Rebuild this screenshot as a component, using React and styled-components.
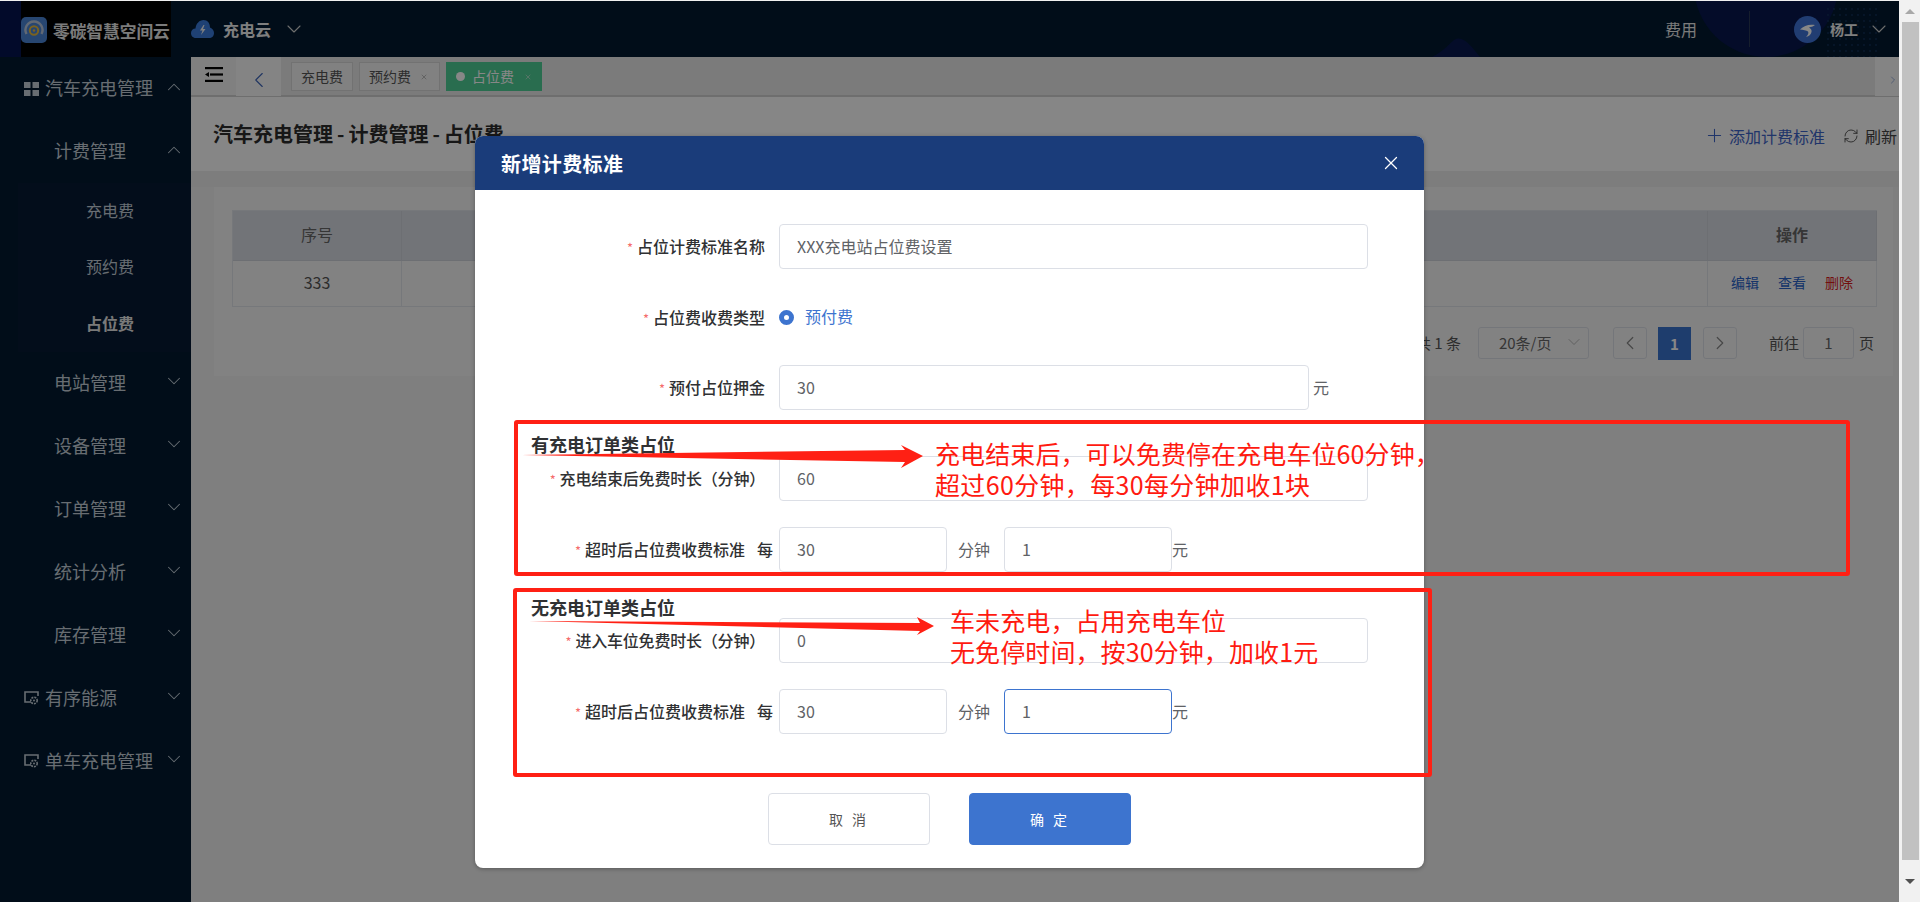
import React from "react";
import styled, { createGlobalStyle } from "styled-components";
import { ChevronDown, ChevronUp, ChevronLeft, ChevronRight, X, Plus, RefreshCw } from "lucide-react";

const FONT = `"Noto Sans CJK SC", "Noto Sans", sans-serif`;

const Global = createGlobalStyle`
  html, body { margin: 0; padding: 0; height: 902px; overflow: hidden; background: #f1f1f1; }
  * { box-sizing: border-box; }
  body { font-family: ${FONT}; }
`;

const Page = styled.div`display: flex; width: 1920px; height: 902px;`;
const Screen = styled.div`position: relative; width: 1899px; height: 902px; padding-top: 1px; background: #f0f0f0; overflow: hidden;`;

/* scrollbar */
const Scrollbar = styled.div`width: 21px; height: 902px; background: #f1f1f1; display: flex; flex-direction: column; align-items: center;`;
const ScrollArrow = styled.div`height: ${p => p.$h}px; width: 100%; display: flex; align-items: center; justify-content: center;`;
const Thumb = styled.div`width: 17px; flex: 1; margin-left: 1px; background: #c1c1c1;`;
const TriUp = styled.div`width: 0; height: 0; border-left: 5px solid transparent; border-right: 5px solid transparent; border-bottom: 5px solid ${p => p.$c};`;
const TriDown = styled.div`width: 0; height: 0; border-left: 5px solid transparent; border-right: 5px solid transparent; border-top: 5px solid ${p => p.$c};`;

/* header */
const Header = styled.header`position: relative; height: 56px; display: flex; align-items: center; background: #021a30; color: #fff; overflow: hidden;`;
const Deco = styled.svg`position: absolute; left: 0; top: 0; pointer-events: none;`;
const LogoWrap = styled.div`position: relative; width: 171px; height: 56px; padding-left: 21px; background: linear-gradient(90deg, #051450 21px, #000 21px); align-self: stretch; flex: none;`;
const LogoInner = styled.div`display: flex; align-items: center; height: 55px; margin-top: 1px; background: #000; gap: 6px;`;
const LogoText = styled.span`font-size: 16.7px; font-weight: 700; color: #e8e8e8; white-space: nowrap; padding-top: 2px;`;
const CloudBox = styled.div`position: relative; display: flex; align-items: center; margin-left: 20px; gap: 9px;`;
const AppName = styled.span`font-size: 16px; font-weight: 700; color: #f0f0f0; padding-bottom: 1px;`;
const HeadChevron = styled(ChevronDown)`color: #d0d0d0; margin-left: ${p => p.$ml || 0}px; margin-right: ${p => p.$mr || 0}px;`;
const HeadRight = styled.div`position: relative; margin-left: auto; display: flex; align-items: center; height: 100%;`;
const Fee = styled.span`font-size: 16px; color: #e8e8e8; margin-right: 52px; padding-bottom: 1px;`;
const HeadDivider = styled.div`width: 1px; height: 36px; background: #2a3a55; margin-right: 44px;`;
const UserName = styled.span`font-size: 14px; font-weight: 700; color: #f0f0f0; margin-left: 9px; margin-right: 9px; padding-bottom: 1px;`;

/* layout */
const Body = styled.div`display: flex; height: 845px;`;
const Sidebar = styled.nav`width: 191px; flex: none; background: #021a30; color: #c4ced8;`;
const MenuItem = styled.div`height: 63px; display: flex; align-items: center; padding-left: ${p => (p.$icon ? "24px" : "54px")}; padding-right: 6px; font-size: 18px; white-space: nowrap;`;
const MenuLabel = styled.span`padding-bottom: 3px;`;
const MenuIcon = styled.svg`flex: none; margin-right: 6px;`;
const MenuChevron = styled.span`margin-left: auto; display: flex; color: #c4ced8; padding-bottom: 4px;`;
const SubMenu = styled.div`margin-left: 18px; background: #061a34;`;
const SubItem = styled.div`height: 56.33px; display: flex; align-items: center; padding-left: 68px; padding-bottom: 2px; font-size: 16px; font-weight: ${p => (p.$active ? 700 : 400)}; color: ${p => (p.$active ? "#e4e4e4" : "#c4ced8")};`;

const Main = styled.main`flex: 1; min-width: 0; display: flex; flex-direction: column;`;
const TabBar = styled.div`height: 40px; display: flex; background: #e9e9e9; border-bottom: 2px solid #d0d0d0;`;
const Collapse = styled.div`width: 45px; height: 38px; display: flex; align-items: flex-start; padding: 10px 0 0 14px; background: #f2f2f2;`;
const NavBtn = styled.div`width: ${p => p.$w}px; height: 39px; padding-top: 7px; display: flex; align-items: center; justify-content: center; background: #fafafa; color: #3d64b8; flex: none; overflow: hidden;`;
const Tabs = styled.div`flex: 1; display: flex; gap: 6px; padding: 5px 0 0 10px;`;
const Tab = styled.div`height: 29px; display: flex; align-items: center; gap: 7px; padding: 0 ${p => (p.$active ? "9px" : p.$closable ? "11px" : "9px")} 2px 9px; font-size: 14px; border: 1px solid ${p => (p.$active ? "#4ecf96" : "#d8d8d8")}; background: ${p => (p.$active ? "#4ecf96" : "#f4f4f4")}; color: ${p => (p.$active ? "#fff" : "#555")};`;
const TabDot = styled.span`width: 9px; height: 9px; margin-top: 2px; border-radius: 50%; background: #fff;`;
const TabClose = styled(X)`margin: 2px 0 0 ${p => (p.$active ? 3 : 2)}px; color: ${p => (p.$active ? "#e8e8e8" : "#888")};`;

const TitleBar = styled.div`height: 74px; display: flex; align-items: center; padding: 0 2px 0 22px; background: #fdfdfd;`;
const PageTitle = styled.h1`margin: 0; padding-bottom: 1px; font-size: 20px; font-weight: 700; color: #2c2c2c; white-space: nowrap;`;
const Sep = styled.span`margin: 0 4px;`;
const TitleActions = styled.div`margin-left: auto; display: flex; align-items: center; font-size: 16px; padding-top: 3px;`;
const AddLink = styled.span`display: flex; align-items: center; gap: 4px; color: #3d64c8; margin-right: 18px;`;
const Refresh = styled.span`display: flex; align-items: center; gap: 6px; color: #444;`;
const Gap = styled.div`height: 16px; background: #ececec;`;
const Panel = styled.section`margin: 0 6px 0 23px; height: 189px; padding: 23px 16px 0 18px; background: #f6f6f6;`;
const Table = styled.div`display: grid; grid-template-columns: 169px 1fr 169px; border-top: 1px solid #dfe2e8; border-left: 1px solid #dfe2e8;`;
const Th = styled.div`height: 50px; padding-bottom: 3px; display: flex; align-items: center; justify-content: center; background: #d8dbe2; border-right: 1px solid #cfd2da; border-bottom: 1px solid #cfd2da; font-size: 16px; font-weight: ${p => (p.$bold ? 700 : 400)}; color: #666;`;
const Td = styled.div`height: 46px; padding-bottom: 3px; display: flex; align-items: center; justify-content: center; gap: 19px; background: #f6f6f6; border-right: 1px solid #dfe2e8; border-bottom: 1px solid #dfe2e8; font-size: 16px; color: #555;`;
const OpLink = styled.span`font-size: 14px; color: ${p => (p.$danger ? "#d81e1e" : "#2a62c8")};`;
const Pager = styled.div`height: 32px; margin-top: 20px; padding-right: 3px; display: flex; align-items: center; justify-content: flex-end; font-size: 15px; color: #555;`;
const PagerBox = styled.div`height: 32px; width: ${p => p.$w}px; margin-left: ${p => p.$ml}px; display: flex; align-items: center; justify-content: ${p => p.$j || "center"}; padding: ${p => p.$pad || "0"}; border: 1px solid #dcdfe6; border-radius: 3px; background: #f6f6f6; color: #666; font-size: 15px;`;
const PageNum = styled.div`height: 33px; width: 33px; margin-left: 11px; display: flex; align-items: center; justify-content: center; background: #3a73cf; color: #fff; font-weight: 700; font-size: 15px;`;
const PagerText = styled.span`margin-left: ${p => p.$ml || 0}px; padding-bottom: 2px;`;

const Overlay = styled.div`position: absolute; inset: 1px 0 0 0; background: rgba(0, 0, 0, 0.47);`;

/* modal */
const Modal = styled.div`position: absolute; left: 475px; top: 136px; width: 949px; height: 732px; border-radius: 8px; background: #fff; overflow: hidden; box-shadow: 0 1px 4px rgba(0, 0, 0, 0.3);`;
const ModalHead = styled.div`height: 54px; display: flex; align-items: center; justify-content: space-between; padding: 0 22px 0 26px; background: #1a3c7a; color: #fff;`;
const ModalTitle = styled.h2`margin: 0; font-size: 20px; font-weight: 700; letter-spacing: 0.4px;`;
const ModalBody = styled.div`padding-top: 34px;`;
const Row = styled.div`height: ${p => p.$h || 45}px; margin-bottom: 26px; display: flex; align-items: center;`;
const Label = styled.label`width: 290px; flex: none; text-align: right; margin-right: 14px; padding-bottom: 1px; font-size: 16px; font-weight: 500; color: #303133; white-space: nowrap; line-height: 1; letter-spacing: ${p => (p.$tight ? "-0.2px" : "0")};`;
const Star = styled.span`color: #f56c6c; font-size: 13px; margin-right: 4px; font-weight: 400;`;
const Per = styled.span`margin-left: 12px; margin-right: -8px;`;
const Input = styled.input`width: ${p => p.$w}px; height: 45px; padding: 0 17px 2px; border: 1px solid ${p => (p.$focus ? "#3d74cf" : "#dcdfe6")}; border-radius: 4px; outline: none; background: #fff; font: 400 16px ${FONT}; color: #606266;`;
const Unit = styled.span`font-size: 16px; color: #606266; margin-left: ${p => p.$ml}px; margin-right: ${p => p.$mr || 0}px; padding-bottom: 1px; flex: none;`;
const Radio = styled.span`width: 15px; height: 15px; border-radius: 50%; background: #fff; border: 5px solid #3d74cf; margin-right: 11px;`;
const RadioText = styled.span`font-size: 16px; color: #3d74cf; padding-bottom: 2px;`;
const SectionHead = styled.h3`margin: ${p => p.$mt}px 0 ${p => p.$mb}px 56px; height: 24px; line-height: 24px; font-size: 18px; font-weight: 700; color: #303133;`;
const Actions = styled.div`margin-top: 59px; display: flex; justify-content: flex-start; padding-left: 293px; gap: 39px;`;
const Btn = styled.button`width: 162px; height: 52px; border-radius: 4px; border: 1px solid ${p => (p.$primary ? "#3d74cf" : "#dcdfe6")}; background: ${p => (p.$primary ? "#3d74cf" : "#fff")}; color: ${p => (p.$primary ? "#fff" : "#555")}; font: 400 14px ${FONT}; letter-spacing: 3px;`;

/* annotation layer */
const RedBox = styled.div`position: absolute; left: ${p => p.$x}px; top: ${p => p.$y}px; width: ${p => p.$w}px; height: ${p => p.$h}px; border: 4px solid #ff2014; border-radius: 3px;`;
const Note = styled.div`position: absolute; left: ${p => p.$x}px; top: ${p => p.$y}px; font-size: 25px; line-height: 31px; letter-spacing: 0.1px; color: #ff1a10; white-space: nowrap;`;
const NoteWide = styled.span`letter-spacing: 0.35px;`;
const ArrowLayer = styled.svg`position: absolute; left: 0; top: 0; pointer-events: none;`;

const Grid = () => (
  <MenuIcon width="15" height="14" viewBox="0 0 15 14">
    <rect x="0" y="0" width="6.5" height="6" fill="currentColor" />
    <rect x="8.5" y="0" width="6.5" height="6" fill="currentColor" />
    <rect x="0" y="8" width="6.5" height="6" fill="currentColor" />
    <rect x="8.5" y="8" width="6.5" height="6" fill="currentColor" />
  </MenuIcon>
);
const Energy = () => (
  <MenuIcon width="15" height="14" viewBox="0 0 15 14" fill="none">
    <path d="M7 11H1V1h13v4" stroke="currentColor" strokeWidth="1.6" />
    <circle cx="10" cy="9.5" r="3.2" stroke="currentColor" strokeWidth="1.6" strokeDasharray="2 1" />
    <circle cx="10" cy="9.5" r="1" fill="currentColor" />
  </MenuIcon>
);

const menuAfter = [
  ["电站管理"], ["设备管理"], ["订单管理"], ["统计分析"], ["库存管理"],
  ["有序能源", "energy"], ["单车充电管理", "energy"],
];

const Chev = ({ up }) => (
  <MenuChevron>{up ? <ChevronUp size={22} strokeWidth={1.1} /> : <ChevronDown size={22} strokeWidth={1.1} />}</MenuChevron>
);

const dots = [];
for (let i = 0; i < 9; i++) for (let j = 0; j < 9; j++) dots.push([1828 + i * 6, 8 + j * 6]);

export default function App() {
  return (
    <Page>
      <Global />
      <Screen>
        <Header>
          <Deco width="1899" height="56" viewBox="0 0 1899 56">
            <circle cx="1766" cy="-16" r="72" fill="#08174f" />
            <path d="M1432 56 C1445 50 1452 39 1456 38 C1464 35 1472 46 1480 56 Z" fill="#08174f" />
            {dots.map(([x, y]) => <circle key={`${x}-${y}`} cx={x} cy={y} r="0.9" fill="#12305a" />)}
          </Deco>
          <LogoWrap>
            <LogoInner>
              <svg width="26" height="26" viewBox="0 0 26 26">
                <rect width="26" height="26" rx="5" fill="#4a84d6" />
                <path d="M5.5 17 A8.5 8.5 0 1 1 20.5 17" fill="none" stroke="#b9c7dc" strokeWidth="2.4" />
                <circle cx="13" cy="13.5" r="4.2" fill="none" stroke="#e7b93c" strokeWidth="2" />
                <circle cx="13" cy="13.5" r="1.2" fill="#e7b93c" />
              </svg>
              <LogoText>零碳智慧空间云</LogoText>
            </LogoInner>
          </LogoWrap>
          <CloudBox>
            <svg width="23" height="19" viewBox="0 0 23 19">
              <path d="M5 18 C1.5 18 0 15.5 0 13 C0 10.5 2 8.5 4.5 8.5 C5 3.5 8.5 0 12.5 0 C16.5 0 19 3 19 7.5 C21.5 8.5 23 10.5 23 13 C23 16 21 18 18 18 Z" fill="#3b7bdc" />
              <path d="M12.5 5 L9 10.5 H11.5 L10 15 L14.5 9 H12 L13.5 5 Z" fill="#f2f2f2" />
            </svg>
            <AppName>充电云</AppName>
            <HeadChevron size={24} strokeWidth={1.1} $ml={2} />
          </CloudBox>
          <HeadRight>
            <Fee>费用</Fee>
            <HeadDivider />
            <svg width="27" height="27" viewBox="0 0 27 27">
              <circle cx="13.5" cy="13.5" r="13.5" fill="#3f74d8" />
              <path d="M6 13.5 C10 9.5 15 8 21 9 C19 10.5 17 11 15 11.5 C17 13 18 14 17.5 16 C17 18.5 15 20.5 12 21 C14 19 15 17 14 15.5 C12.5 14 9 14 6 13.5 Z" fill="#fff" />
            </svg>
            <UserName>杨工</UserName>
            <HeadChevron size={24} strokeWidth={1.1} $mr={8} />
          </HeadRight>
        </Header>
        <Body>
          <Sidebar>
            <MenuItem $icon><Grid /><MenuLabel>汽车充电管理</MenuLabel><Chev up /></MenuItem>
            <MenuItem><MenuLabel>计费管理</MenuLabel><Chev up /></MenuItem>
            <SubMenu>
              <SubItem>充电费</SubItem>
              <SubItem>预约费</SubItem>
              <SubItem $active>占位费</SubItem>
            </SubMenu>
            {menuAfter.map(([name, icon]) => (
              <MenuItem key={name} $icon={!!icon}>{icon && <Energy />}<MenuLabel>{name}</MenuLabel><Chev /></MenuItem>
            ))}
          </Sidebar>
          <Main>
            <TabBar>
              <Collapse>
                <svg width="18" height="15" viewBox="0 0 18 15">
                  <rect x="0" y="0" width="18" height="2.2" fill="#000" />
                  <rect x="5" y="6.4" width="13" height="2.2" fill="#000" />
                  <rect x="0" y="12.8" width="18" height="2.2" fill="#000" />
                  <path d="M0 7.5 L4 5 V10 Z" fill="#000" />
                </svg>
              </Collapse>
              <NavBtn $w={45}><ChevronLeft size={26} strokeWidth={1} /></NavBtn>
              <Tabs>
                <Tab>充电费</Tab>
                <Tab $closable>预约费<TabClose size={8} strokeWidth={1.6} /></Tab>
                <Tab $active $closable><TabDot />占位费<TabClose $active size={8} strokeWidth={1.6} /></Tab>
              </Tabs>
              <NavBtn $w={24}><ChevronRight size={26} strokeWidth={1} style={{ marginLeft: 12 }} /></NavBtn>
            </TabBar>
            <TitleBar>
              <PageTitle>汽车充电管理<Sep>-</Sep>计费管理<Sep>-</Sep>占位费</PageTitle>
              <TitleActions>
                <AddLink><Plus size={21} strokeWidth={1.2} />添加计费标准</AddLink>
                <Refresh><RefreshCw size={16} strokeWidth={1.3} />刷新</Refresh>
              </TitleActions>
            </TitleBar>
            <Gap />
            <Panel>
              <Table>
                <Th>序号</Th><Th /><Th $bold>操作</Th>
                <Td>333</Td><Td />
                <Td><OpLink>编辑</OpLink><OpLink>查看</OpLink><OpLink $danger>删除</OpLink></Td>
              </Table>
              <Pager>
                <PagerText>共 1 条</PagerText>
                <PagerBox $w={111} $ml={17} $j="space-between" $pad="0 4px 2px 20px">20条/页<ChevronDown size={20} strokeWidth={1} color="#aaa" /></PagerBox>
                <PagerBox $w={34} $ml={24}><ChevronLeft size={22} strokeWidth={1.3} color="#888" /></PagerBox>
                <PageNum>1</PageNum>
                <PagerBox $w={34} $ml={12}><ChevronRight size={22} strokeWidth={1.3} color="#888" /></PagerBox>
                <PagerText $ml={32}>前往</PagerText>
                <PagerBox $w={51} $ml={4} $pad="0 0 2px">1</PagerBox>
                <PagerText $ml={5}>页</PagerText>
              </Pager>
            </Panel>
          </Main>
        </Body>
        <Overlay />
        <Modal>
          <ModalHead>
            <ModalTitle>新增计费标准</ModalTitle>
            <X size={22} strokeWidth={1.4} />
          </ModalHead>
          <ModalBody>
            <Row>
              <Label><Star>*</Star>占位计费标准名称</Label>
              <Input $w={589} value="XXX充电站占位费设置" readOnly />
            </Row>
            <Row $h={44}>
              <Label><Star>*</Star>占位费收费类型</Label>
              <Radio /><RadioText>预付费</RadioText>
            </Row>
            <Row>
              <Label><Star>*</Star>预付占位押金</Label>
              <Input $w={530} value="30" readOnly />
              <Unit $ml={4}>元</Unit>
            </Row>
            <SectionHead $mt={-4} $mb={0}>有充电订单类占位</SectionHead>
            <Row>
              <Label $tight><Star>*</Star>充电结束后免费时长（分钟）</Label>
              <Input $w={589} value="60" readOnly />
            </Row>
            <Row>
              <Label><Star>*</Star>超时后占位费收费标准<Per>每</Per></Label>
              <Input $w={168} value="30" readOnly />
              <Unit $ml={11} $mr={14}>分钟</Unit>
              <Input $w={168} value="1" readOnly />
              <Unit $ml={0}>元</Unit>
            </Row>
            <SectionHead $mt={-3} $mb={-1}>无充电订单类占位</SectionHead>
            <Row>
              <Label $tight><Star>*</Star>进入车位免费时长（分钟）</Label>
              <Input $w={589} value="0" readOnly />
            </Row>
            <Row>
              <Label><Star>*</Star>超时后占位费收费标准<Per>每</Per></Label>
              <Input $w={168} value="30" readOnly />
              <Unit $ml={11} $mr={14}>分钟</Unit>
              <Input $w={168} $focus value="1" readOnly />
              <Unit $ml={0}>元</Unit>
            </Row>
            <Actions>
              <Btn>取 消</Btn>
              <Btn $primary>确 定</Btn>
            </Actions>
          </ModalBody>
        </Modal>
        <RedBox $x={514} $y={420} $w={1336} $h={156} />
        <RedBox $x={513} $y={588} $w={919} $h={189} />
        <ArrowLayer width="1899" height="902" viewBox="0 0 1899 902">
          <path d="M522 455 L905 450 L901 445 L923 456 L901 468 L905 462 Z" fill="#ff2014" />
          <path d="M529 621 L920 623 L917 617 L934 626 L917 635 L920 631 Z" fill="#ff2014" />
        </ArrowLayer>
        <Note $x={935} $y={438}>充电结束后，可以免费停在充电车位60分钟，<br /><NoteWide>超过60分钟，每30每分钟加收1块</NoteWide></Note>
        <Note $x={950} $y={605}>车未充电，占用充电车位<br />无免停时间，按30分钟，加收1元</Note>
      </Screen>
      <Scrollbar>
        <ScrollArrow $h={22}><TriUp $c="#a8a8a8" /></ScrollArrow>
        <Thumb />
        <ScrollArrow $h={42}><TriDown $c="#505050" /></ScrollArrow>
      </Scrollbar>
    </Page>
  );
}
